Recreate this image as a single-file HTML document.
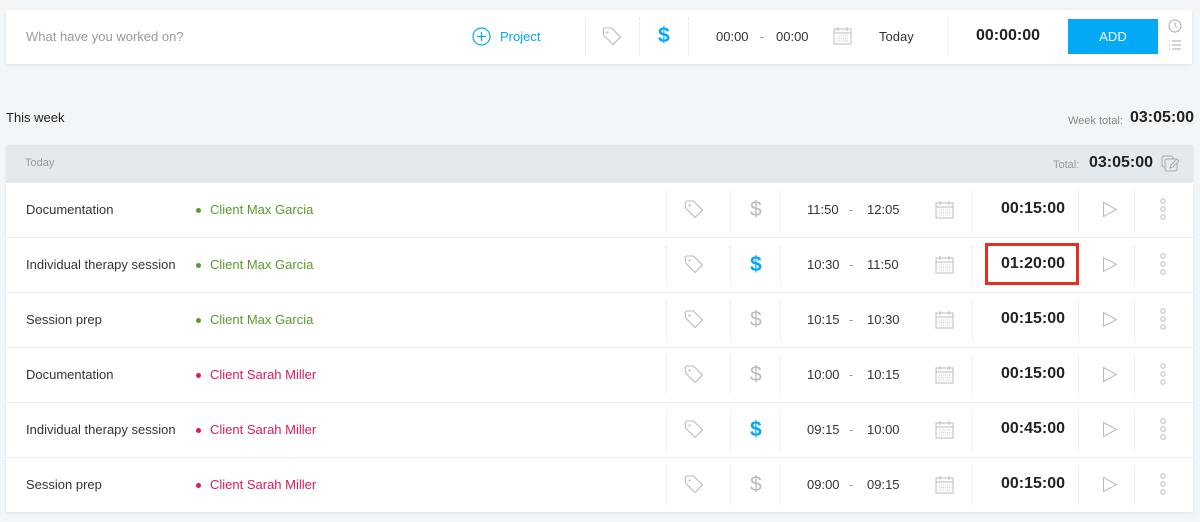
<!DOCTYPE html>
<html><head><meta charset="utf-8"><style>
*{margin:0;padding:0;box-sizing:border-box}
body{width:1200px;height:522px;background:#f2f6f8;font-family:"Liberation Sans",sans-serif;position:relative;overflow:hidden;color:#333}
.a{position:absolute}
.bar{left:6px;top:10px;width:1186px;height:54px;background:#fff;box-shadow:0 1px 4px rgba(0,0,0,.08)}
.vd{position:absolute;width:0;border-left:1px dotted #e4e4e4}
.card{left:6px;top:145px;width:1187px;height:367px;background:#fff;box-shadow:0 1px 3px rgba(0,0,0,.08)}
.hdr{left:0;top:0;width:1187px;height:37px;background:#e4e9ed}
.row{position:absolute;left:0;width:1187px;height:55px;border-top:1px solid #e9edf0}
.row span{position:absolute;top:19px;font-size:13px;line-height:16px}
.proj:before{content:"";position:absolute;left:-14px;top:6px;width:5px;height:5px;border-radius:50%;background:currentColor}
.g{color:#5a9a2d}.r{color:#d81b5c}
.row .dur{font-size:16px;font-weight:bold;top:18px;left:995px;color:#222}
.row .d{left:744px;top:15px;font-size:21px;line-height:24px;color:#bbb}
.row .d.on{color:#03a9f4;font-weight:bold}
.row svg{position:absolute}
</style></head><body>
<div class="a bar">
 <div class="a" style="left:20px;top:19px;font-size:13px;color:#999">What have you worked on?</div>
 <svg class="a" style="left:466px;top:17px" width="19" height="19" viewBox="0 0 19 19"><circle cx="9.5" cy="9.5" r="8.5" fill="none" stroke="#03a9f4" stroke-width="1.2"/><path d="M9.5 5v9M5 9.5h9" stroke="#03a9f4" stroke-width="1.2"/></svg>
 <div class="a" style="left:494px;top:19px;font-size:13px;color:#03a9f4">Project</div>
 <div class="vd" style="left:579px;top:8px;height:38px"></div>
 <div class="vd" style="left:633px;top:8px;height:38px"></div>
 <div class="vd" style="left:682px;top:8px;height:38px"></div>
 <div class="vd" style="left:942px;top:8px;height:38px"></div>
 <svg class="a" style="left:595px;top:16px" width="22" height="22" viewBox="0 0 22 22"><path d="M2 3.5L3.5 2h7l9 9-7.5 7.5-9-9z" fill="none" stroke="#bbb" stroke-width="1.1"/><circle cx="6.5" cy="6.5" r="1.1" fill="#bbb"/></svg>
 <div class="a" style="left:652px;top:14px;font-size:21px;font-weight:bold;color:#03a9f4">$</div>
 <div class="a" style="left:710px;top:19px;font-size:13px">00:00</div>
 <div class="a" style="left:754px;top:19px;font-size:13px;color:#999">-</div>
 <div class="a" style="left:770px;top:19px;font-size:13px">00:00</div>
 <svg class="a" style="left:827px;top:16px" width="19" height="19" viewBox="0 0 19 19"><rect x="1" y="3" width="17" height="15" fill="none" stroke="#bbb"/><path d="M1 7h17M5 1v4M14 1v4" stroke="#bbb"/><path d="M4 10h11M4 12.5h11M4 15h11" stroke="#ccc" stroke-dasharray="1 1"/></svg>
 <div class="a" style="left:873px;top:19px;font-size:13px">Today</div>
 <div class="a" style="left:970px;top:17px;font-size:16px;font-weight:bold;color:#222">00:00:00</div>
 <div class="a" style="left:1062px;top:9px;width:90px;height:35px;background:#03a9f4;color:#fff;font-size:13px;text-align:center;line-height:35px">ADD</div>
 <svg class="a" style="left:1162px;top:9px" width="14" height="14" viewBox="0 0 14 14"><circle cx="7" cy="7" r="6" fill="none" stroke="#aaa"/><path d="M7 3.5V7l2.5 1.5" fill="none" stroke="#aaa"/></svg>
 <svg class="a" style="left:1162px;top:29px" width="14" height="12" viewBox="0 0 14 12"><path d="M1 2h1M4 2h9M1 6h1M4 6h9M1 10h1M4 10h9" stroke="#aaa"/></svg>
</div>
<div class="a" style="left:6px;top:110px;font-size:13px;color:#222">This week</div>
<div class="a" style="left:1068px;top:115px;font-size:11px;color:#888">Week total:</div>
<div class="a" style="left:1130px;top:109px;font-size:16px;font-weight:bold;color:#222">03:05:00</div>
<div class="a card">
 <div class="a hdr">
  <div class="a" style="left:19px;top:12px;font-size:11px;color:#999">Today</div>
  <div class="a" style="left:1047px;top:14px;font-size:11px;color:#999">Total:</div>
  <div class="a" style="left:1083px;top:9px;font-size:16px;font-weight:bold;color:#222">03:05:00</div>
  <svg class="a" style="left:1155px;top:10px" width="20" height="18" viewBox="0 0 20 18"><rect x="1" y="1" width="11" height="11" rx="2" fill="none" stroke="#aaa"/><rect x="4" y="4" width="12" height="12" rx="2" fill="#e4e9ed" stroke="#aaa"/><path d="M9 13l1-3 6-6 2 2-6 6z" fill="#e4e9ed" stroke="#aaa"/></svg>
 </div>
</div>
<div class="a" style="left:6px;top:182px;width:1187px">

<div class="row" style="top:0"><span style="left:20px">Documentation</span><span class="proj g" style="left:204px">Client Max Garcia</span>
<div class="vd" style="left:660px;top:8px;height:40px"></div><div class="vd" style="left:724px;top:8px;height:40px"></div><div class="vd" style="left:774px;top:8px;height:40px"></div><div class="vd" style="left:966px;top:8px;height:40px"></div><div class="vd" style="left:1072px;top:8px;height:40px"></div><div class="vd" style="left:1128px;top:8px;height:40px"></div>
<svg style="left:677px;top:16px" width="22" height="22" viewBox="0 0 22 22"><path d="M2 3.5L3.5 2h7l9 9-7.5 7.5-9-9z" fill="none" stroke="#bbb" stroke-width="1.1"/><circle cx="6.5" cy="6.5" r="1.1" fill="#bbb"/></svg>
<span class="d">$</span>
<span style="left:801px">11:50</span><span style="left:843px;color:#999">-</span><span style="left:861px">12:05</span>
<svg style="left:929px;top:17px" width="19" height="19" viewBox="0 0 19 19"><rect x="1" y="3" width="17" height="15" fill="none" stroke="#bbb"/><path d="M1 7h17M5 1v4M14 1v4" stroke="#bbb"/><path d="M4 10h11M4 12.5h11M4 15h11" stroke="#ccc" stroke-dasharray="1 1"/></svg>
<span class="dur">00:15:00</span>
<svg style="left:1096px;top:18px" width="16" height="17" viewBox="0 0 16 17"><path d="M1.5 1.5l13 7-13 7z" fill="none" stroke="#bbb"/></svg>
<svg style="left:1153px;top:15px" width="8" height="22" viewBox="0 0 8 22"><circle cx="4" cy="3" r="2.2" fill="none" stroke="#bbb"/><circle cx="4" cy="11" r="2.2" fill="none" stroke="#bbb"/><circle cx="4" cy="19" r="2.2" fill="none" stroke="#bbb"/></svg></div>

<div class="row" style="top:55px"><span style="left:20px">Individual therapy session</span><span class="proj g" style="left:204px">Client Max Garcia</span>
<div class="vd" style="left:660px;top:8px;height:40px"></div><div class="vd" style="left:724px;top:8px;height:40px"></div><div class="vd" style="left:774px;top:8px;height:40px"></div><div class="vd" style="left:966px;top:8px;height:40px"></div><div class="vd" style="left:1072px;top:8px;height:40px"></div><div class="vd" style="left:1128px;top:8px;height:40px"></div>
<svg style="left:677px;top:16px" width="22" height="22" viewBox="0 0 22 22"><path d="M2 3.5L3.5 2h7l9 9-7.5 7.5-9-9z" fill="none" stroke="#bbb" stroke-width="1.1"/><circle cx="6.5" cy="6.5" r="1.1" fill="#bbb"/></svg>
<span class="d on">$</span>
<span style="left:801px">10:30</span><span style="left:843px;color:#999">-</span><span style="left:861px">11:50</span>
<svg style="left:929px;top:17px" width="19" height="19" viewBox="0 0 19 19"><rect x="1" y="3" width="17" height="15" fill="none" stroke="#bbb"/><path d="M1 7h17M5 1v4M14 1v4" stroke="#bbb"/><path d="M4 10h11M4 12.5h11M4 15h11" stroke="#ccc" stroke-dasharray="1 1"/></svg>
<div style="position:absolute;left:979px;top:5px;width:94px;height:42px;border:3px solid #e0301e"></div>
<span class="dur">01:20:00</span>
<svg style="left:1096px;top:18px" width="16" height="17" viewBox="0 0 16 17"><path d="M1.5 1.5l13 7-13 7z" fill="none" stroke="#bbb"/></svg>
<svg style="left:1153px;top:15px" width="8" height="22" viewBox="0 0 8 22"><circle cx="4" cy="3" r="2.2" fill="none" stroke="#bbb"/><circle cx="4" cy="11" r="2.2" fill="none" stroke="#bbb"/><circle cx="4" cy="19" r="2.2" fill="none" stroke="#bbb"/></svg></div>

<div class="row" style="top:110px"><span style="left:20px">Session prep</span><span class="proj g" style="left:204px">Client Max Garcia</span>
<div class="vd" style="left:660px;top:8px;height:40px"></div><div class="vd" style="left:724px;top:8px;height:40px"></div><div class="vd" style="left:774px;top:8px;height:40px"></div><div class="vd" style="left:966px;top:8px;height:40px"></div><div class="vd" style="left:1072px;top:8px;height:40px"></div><div class="vd" style="left:1128px;top:8px;height:40px"></div>
<svg style="left:677px;top:16px" width="22" height="22" viewBox="0 0 22 22"><path d="M2 3.5L3.5 2h7l9 9-7.5 7.5-9-9z" fill="none" stroke="#bbb" stroke-width="1.1"/><circle cx="6.5" cy="6.5" r="1.1" fill="#bbb"/></svg>
<span class="d">$</span>
<span style="left:801px">10:15</span><span style="left:843px;color:#999">-</span><span style="left:861px">10:30</span>
<svg style="left:929px;top:17px" width="19" height="19" viewBox="0 0 19 19"><rect x="1" y="3" width="17" height="15" fill="none" stroke="#bbb"/><path d="M1 7h17M5 1v4M14 1v4" stroke="#bbb"/><path d="M4 10h11M4 12.5h11M4 15h11" stroke="#ccc" stroke-dasharray="1 1"/></svg>
<span class="dur">00:15:00</span>
<svg style="left:1096px;top:18px" width="16" height="17" viewBox="0 0 16 17"><path d="M1.5 1.5l13 7-13 7z" fill="none" stroke="#bbb"/></svg>
<svg style="left:1153px;top:15px" width="8" height="22" viewBox="0 0 8 22"><circle cx="4" cy="3" r="2.2" fill="none" stroke="#bbb"/><circle cx="4" cy="11" r="2.2" fill="none" stroke="#bbb"/><circle cx="4" cy="19" r="2.2" fill="none" stroke="#bbb"/></svg></div>

<div class="row" style="top:165px"><span style="left:20px">Documentation</span><span class="proj r" style="left:204px">Client Sarah Miller</span>
<div class="vd" style="left:660px;top:8px;height:40px"></div><div class="vd" style="left:724px;top:8px;height:40px"></div><div class="vd" style="left:774px;top:8px;height:40px"></div><div class="vd" style="left:966px;top:8px;height:40px"></div><div class="vd" style="left:1072px;top:8px;height:40px"></div><div class="vd" style="left:1128px;top:8px;height:40px"></div>
<svg style="left:677px;top:16px" width="22" height="22" viewBox="0 0 22 22"><path d="M2 3.5L3.5 2h7l9 9-7.5 7.5-9-9z" fill="none" stroke="#bbb" stroke-width="1.1"/><circle cx="6.5" cy="6.5" r="1.1" fill="#bbb"/></svg>
<span class="d">$</span>
<span style="left:801px">10:00</span><span style="left:843px;color:#999">-</span><span style="left:861px">10:15</span>
<svg style="left:929px;top:17px" width="19" height="19" viewBox="0 0 19 19"><rect x="1" y="3" width="17" height="15" fill="none" stroke="#bbb"/><path d="M1 7h17M5 1v4M14 1v4" stroke="#bbb"/><path d="M4 10h11M4 12.5h11M4 15h11" stroke="#ccc" stroke-dasharray="1 1"/></svg>
<span class="dur">00:15:00</span>
<svg style="left:1096px;top:18px" width="16" height="17" viewBox="0 0 16 17"><path d="M1.5 1.5l13 7-13 7z" fill="none" stroke="#bbb"/></svg>
<svg style="left:1153px;top:15px" width="8" height="22" viewBox="0 0 8 22"><circle cx="4" cy="3" r="2.2" fill="none" stroke="#bbb"/><circle cx="4" cy="11" r="2.2" fill="none" stroke="#bbb"/><circle cx="4" cy="19" r="2.2" fill="none" stroke="#bbb"/></svg></div>

<div class="row" style="top:220px"><span style="left:20px">Individual therapy session</span><span class="proj r" style="left:204px">Client Sarah Miller</span>
<div class="vd" style="left:660px;top:8px;height:40px"></div><div class="vd" style="left:724px;top:8px;height:40px"></div><div class="vd" style="left:774px;top:8px;height:40px"></div><div class="vd" style="left:966px;top:8px;height:40px"></div><div class="vd" style="left:1072px;top:8px;height:40px"></div><div class="vd" style="left:1128px;top:8px;height:40px"></div>
<svg style="left:677px;top:16px" width="22" height="22" viewBox="0 0 22 22"><path d="M2 3.5L3.5 2h7l9 9-7.5 7.5-9-9z" fill="none" stroke="#bbb" stroke-width="1.1"/><circle cx="6.5" cy="6.5" r="1.1" fill="#bbb"/></svg>
<span class="d on">$</span>
<span style="left:801px">09:15</span><span style="left:843px;color:#999">-</span><span style="left:861px">10:00</span>
<svg style="left:929px;top:17px" width="19" height="19" viewBox="0 0 19 19"><rect x="1" y="3" width="17" height="15" fill="none" stroke="#bbb"/><path d="M1 7h17M5 1v4M14 1v4" stroke="#bbb"/><path d="M4 10h11M4 12.5h11M4 15h11" stroke="#ccc" stroke-dasharray="1 1"/></svg>
<span class="dur">00:45:00</span>
<svg style="left:1096px;top:18px" width="16" height="17" viewBox="0 0 16 17"><path d="M1.5 1.5l13 7-13 7z" fill="none" stroke="#bbb"/></svg>
<svg style="left:1153px;top:15px" width="8" height="22" viewBox="0 0 8 22"><circle cx="4" cy="3" r="2.2" fill="none" stroke="#bbb"/><circle cx="4" cy="11" r="2.2" fill="none" stroke="#bbb"/><circle cx="4" cy="19" r="2.2" fill="none" stroke="#bbb"/></svg></div>

<div class="row" style="top:275px"><span style="left:20px">Session prep</span><span class="proj r" style="left:204px">Client Sarah Miller</span>
<div class="vd" style="left:660px;top:8px;height:40px"></div><div class="vd" style="left:724px;top:8px;height:40px"></div><div class="vd" style="left:774px;top:8px;height:40px"></div><div class="vd" style="left:966px;top:8px;height:40px"></div><div class="vd" style="left:1072px;top:8px;height:40px"></div><div class="vd" style="left:1128px;top:8px;height:40px"></div>
<svg style="left:677px;top:16px" width="22" height="22" viewBox="0 0 22 22"><path d="M2 3.5L3.5 2h7l9 9-7.5 7.5-9-9z" fill="none" stroke="#bbb" stroke-width="1.1"/><circle cx="6.5" cy="6.5" r="1.1" fill="#bbb"/></svg>
<span class="d">$</span>
<span style="left:801px">09:00</span><span style="left:843px;color:#999">-</span><span style="left:861px">09:15</span>
<svg style="left:929px;top:17px" width="19" height="19" viewBox="0 0 19 19"><rect x="1" y="3" width="17" height="15" fill="none" stroke="#bbb"/><path d="M1 7h17M5 1v4M14 1v4" stroke="#bbb"/><path d="M4 10h11M4 12.5h11M4 15h11" stroke="#ccc" stroke-dasharray="1 1"/></svg>
<span class="dur">00:15:00</span>
<svg style="left:1096px;top:18px" width="16" height="17" viewBox="0 0 16 17"><path d="M1.5 1.5l13 7-13 7z" fill="none" stroke="#bbb"/></svg>
<svg style="left:1153px;top:15px" width="8" height="22" viewBox="0 0 8 22"><circle cx="4" cy="3" r="2.2" fill="none" stroke="#bbb"/><circle cx="4" cy="11" r="2.2" fill="none" stroke="#bbb"/><circle cx="4" cy="19" r="2.2" fill="none" stroke="#bbb"/></svg></div>
</div>
</body></html>
